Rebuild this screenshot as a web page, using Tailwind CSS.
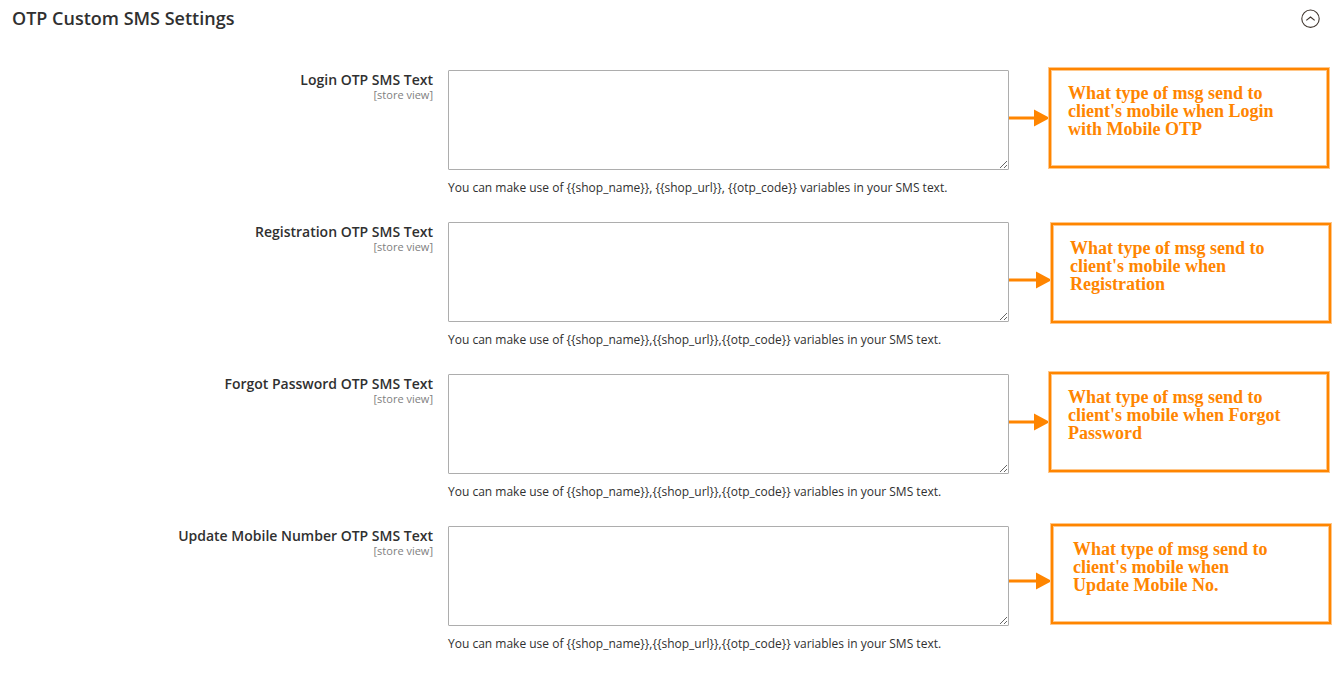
<!DOCTYPE html>
<html lang="en">
<head>
  <meta charset="UTF-8">
  <meta name="viewport" content="width=device-width, initial-scale=1.0">
  <title>OTP Custom SMS Settings</title>
  <script src="https://cdn.jsdelivr.net/npm/@tailwindcss/browser@4"></script>
</head>
<body class="bg-white font-['Open_Sans',sans-serif] text-[#303030]">
  <!-- Section header -->
  <header class="flex items-center justify-between pl-3 pr-5 pt-1.5">
    <h1 class="text-lg leading-6 font-semibold">OTP Custom SMS Settings</h1>
    <button type="button" aria-label="Collapse section" class="text-[#41362f]">
      <svg class="size-5" viewBox="0 0 20 20" fill="none" stroke="currentColor">
        <circle cx="10.5" cy="10.7" r="8.7" stroke-width="1.1"/>
        <path d="M6.3 12.4l4.2-3.4 4.2 3.4" stroke-width="1.2"/>
      </svg>
    </button>
  </header>

  <form class="flex flex-col gap-[26px] pt-10 pb-6 pl-3 pr-2">
    <!-- Login -->
    <div class="grid grid-cols-[421fr_576fr_323px]">
      <div class="text-right">
        <label for="login-text" class="block text-sm leading-5 font-semibold">Login OTP SMS Text</label>
        <span class="block -mt-px text-[11px] leading-3 text-[#808080]">[store view]</span>
      </div>
      <div class="pl-[15px]">
        <textarea id="login-text" class="block w-full h-[100px] border border-[#adadad] rounded-[1px] bg-white p-2 text-sm"></textarea>
        <p class="mt-2.5 text-xs leading-4">You can make use of {{shop_name}}, {{shop_url}}, {{otp_code}} variables in your SMS text.</p>
      </div>
      <div class="flex items-center self-start -mt-[3px] text-[#ff8500]">
        <svg class="w-[39px] h-[18px] shrink-0" viewBox="0 0 39 18" fill="currentColor">
          <path d="M0 7.5h25V0.5L41 9 25 17.5V10.5H0z"/>
        </svg>
        <div class="w-[282px] h-[102px] shrink-0 border border-[#ffc78a]">
          <p class="h-full border-2 border-[#ff8500] inset-ring inset-ring-[#ffc78a] pt-3.5 pl-[17px] font-['Liberation_Serif',serif] text-lg leading-[18px] font-bold">What type of msg send to<br>client's mobile when Login<br>with Mobile OTP</p>
        </div>
      </div>
    </div>

    <!-- Registration -->
    <div class="grid grid-cols-[421fr_576fr_323px]">
      <div class="text-right">
        <label for="registration-text" class="block text-sm leading-5 font-semibold">Registration OTP SMS Text</label>
        <span class="block -mt-px text-[11px] leading-3 text-[#808080]">[store view]</span>
      </div>
      <div class="pl-[15px]">
        <textarea id="registration-text" class="block w-full h-[100px] border border-[#adadad] rounded-[1px] bg-white p-2 text-sm"></textarea>
        <p class="mt-2.5 text-xs leading-4">You can make use of {{shop_name}},{{shop_url}},{{otp_code}} variables in your SMS text.</p>
      </div>
      <div class="flex items-center self-start text-[#ff8500]">
        <svg class="w-[41px] h-8 pt-3.5 shrink-0" viewBox="0 0 41 18" fill="currentColor">
          <path d="M0 7.5h27V0.5L43 9 27 17.5V10.5H0z"/>
        </svg>
        <div class="w-[282px] h-[102px] shrink-0 border border-[#ffc78a]">
          <p class="h-full border-2 border-[#ff8500] inset-ring inset-ring-[#ffc78a] pt-3.5 pl-[17px] font-['Liberation_Serif',serif] text-lg leading-[18px] font-bold">What type of msg send to<br>client's mobile when<br>Registration</p>
        </div>
      </div>
    </div>

    <!-- Forgot password -->
    <div class="grid grid-cols-[421fr_576fr_323px]">
      <div class="text-right">
        <label for="forgot-text" class="block text-sm leading-5 font-semibold">Forgot Password OTP SMS Text</label>
        <span class="block -mt-px text-[11px] leading-3 text-[#808080]">[store view]</span>
      </div>
      <div class="pl-[15px]">
        <textarea id="forgot-text" class="block w-full h-[100px] border border-[#adadad] rounded-[1px] bg-white p-2 text-sm"></textarea>
        <p class="mt-2.5 text-xs leading-4">You can make use of {{shop_name}},{{shop_url}},{{otp_code}} variables in your SMS text.</p>
      </div>
      <div class="flex items-center self-start -mt-[3px] text-[#ff8500]">
        <svg class="w-[39px] h-[18px] shrink-0" viewBox="0 0 39 18" fill="currentColor">
          <path d="M0 7.5h25V0.5L41 9 25 17.5V10.5H0z"/>
        </svg>
        <div class="w-[282px] h-[102px] shrink-0 border border-[#ffc78a]">
          <p class="h-full border-2 border-[#ff8500] inset-ring inset-ring-[#ffc78a] pt-3.5 pl-[17px] font-['Liberation_Serif',serif] text-lg leading-[18px] font-bold">What type of msg send to<br>client's mobile when Forgot<br>Password</p>
        </div>
      </div>
    </div>

    <!-- Update mobile number -->
    <div class="grid grid-cols-[421fr_576fr_323px]">
      <div class="text-right">
        <label for="update-text" class="block text-sm leading-5 font-semibold">Update Mobile Number OTP SMS Text</label>
        <span class="block -mt-px text-[11px] leading-3 text-[#808080]">[store view]</span>
      </div>
      <div class="pl-[15px]">
        <textarea id="update-text" class="block w-full h-[100px] border border-[#adadad] rounded-[1px] bg-white p-2 text-sm"></textarea>
        <p class="mt-2.5 text-xs leading-4">You can make use of {{shop_name}},{{shop_url}},{{otp_code}} variables in your SMS text.</p>
      </div>
      <div class="flex items-center self-start -mt-[3px] text-[#ff8500]">
        <svg class="w-[41px] h-8 pt-3.5 shrink-0" viewBox="0 0 41 18" fill="currentColor">
          <path d="M0 7.5h27V0.5L43 9 27 17.5V10.5H0z"/>
        </svg>
        <div class="w-[282px] h-[102px] shrink-0 border border-[#ffc78a]">
          <p class="h-full border-2 border-[#ff8500] inset-ring inset-ring-[#ffc78a] pt-3.5 pl-5 font-['Liberation_Serif',serif] text-lg leading-[18px] font-bold">What type of msg send to<br>client's mobile when<br>Update Mobile No.</p>
        </div>
      </div>
    </div>
  </form>
</body>
</html>
